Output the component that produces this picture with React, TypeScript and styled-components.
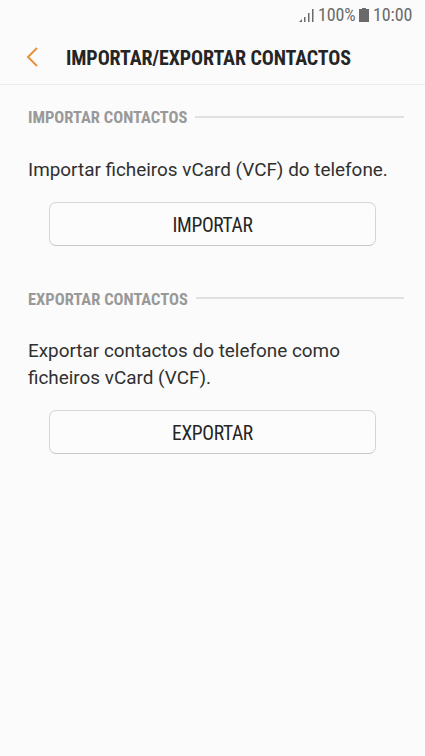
import React from "react";
import styled, { createGlobalStyle } from "styled-components";

const GlobalStyle = createGlobalStyle`
  * { box-sizing: border-box; }
  body { margin: 0; background: #fbfbfb; }
`;

const Screen = styled.main`
  width: 425px;
  height: 756px;
  background: #fbfbfb;
  color: #303030;
  font-family: Roboto, sans-serif;
  overflow: hidden;
`;

const StatusBar = styled.div`
  display: flex;
  justify-content: flex-end;
  align-items: center;
  height: 30px;
  padding-right: 13px;
  color: #6a6a6a;
`;

const StatusText = styled.span<{ $width: number }>`
  width: ${(p) => p.$width}px;
  font-size: 18px;
  font-stretch: 75%;
  letter-spacing: -0.1px;
  line-height: 24px;
  white-space: nowrap;
`;

const SignalIcon = styled.svg`
  width: 15px;
  height: 14px;
  margin-right: 4px;
`;

const BatteryIcon = styled.svg`
  width: 10px;
  height: 14px;
  margin: 0 4px 0 3px;
`;

const Header = styled.header`
  display: flex;
  align-items: center;
  height: 55px;
  padding-left: 26px;
  border-bottom: 1px solid #ededed;
`;

const BackButton = styled.button`
  display: flex;
  width: 40px;
  padding: 0;
  border: 0;
  background: none;
`;

const Title = styled.h1`
  margin: 0;
  padding-top: 1px;
  color: #252525;
  font-size: 20px;
  font-weight: 700;
  font-stretch: 75%;
  letter-spacing: -0.1px;
  line-height: 24px;
  white-space: nowrap;
`;

const Section = styled.section<{ $top: number }>`
  padding: ${(p) => p.$top}px 21px 0 28px;
`;

const SectionHeading = styled.h2`
  display: flex;
  align-items: center;
  gap: 8px;
  height: 20px;
  margin: 0;
  color: #999;
  font-size: 16.5px;
  font-weight: 700;
  font-stretch: 75%;
  line-height: 20px;
  white-space: nowrap;
  &::after {
    content: "";
    flex: 1;
    height: 2px;
    background: #e0e0e0;
  }
`;

const HeadingLabel = styled.span<{ $drop: number }>`
  padding-top: ${(p) => p.$drop}px;
`;

const Description = styled.p`
  margin: 29px 0 0;
  font-size: 18.9px;
  line-height: 27px;
`;

const ActionButton = styled.button`
  display: flex;
  align-items: center;
  justify-content: center;
  width: 327px;
  height: 44px;
  margin: 19px 0 0 21px;
  padding: 3px 0 0;
  border: 1px solid #d6d6d6;
  border-bottom-color: #c8c8c8;
  border-radius: 7px;
  background: #fcfcfc;
  color: #252525;
  font-family: inherit;
  font-size: 19.5px;
  font-stretch: 75%;
  letter-spacing: -0.35px;
  line-height: 24px;
`;

export default function App() {
  return (
    <Screen>
      <GlobalStyle />
      <StatusBar>
        <SignalIcon viewBox="0 0 15 14" fill="currentColor">
          <path d="M0 14l3-3v3zM5 9h1.5v5H5zM9 5h1.5v9H9zM13 1h1.5v13H13z" />
        </SignalIcon>
        <StatusText $width={38}>100%</StatusText>
        <BatteryIcon viewBox="0 0 10 14" fill="currentColor">
          <path d="M3 0h4v1h3v13H0V1h3z" />
        </BatteryIcon>
        <StatusText $width={39}>10:00</StatusText>
      </StatusBar>
      <Header>
        <BackButton aria-label="Voltar">
          <svg width="14" height="20" viewBox="0 0 14 20" fill="none" stroke="#e8923c" strokeWidth="2">
            <path d="M11 1 2 10l9 9" />
          </svg>
        </BackButton>
        <Title>IMPORTAR/EXPORTAR CONTACTOS</Title>
      </Header>
      <Section $top={22}>
        <SectionHeading><HeadingLabel $drop={2}>IMPORTAR CONTACTOS</HeadingLabel></SectionHeading>
        <Description>Importar ficheiros vCard (VCF) do telefone.</Description>
        <ActionButton>IMPORTAR</ActionButton>
      </Section>
      <Section $top={42}>
        <SectionHeading><HeadingLabel $drop={4}>EXPORTAR CONTACTOS</HeadingLabel></SectionHeading>
        <Description>Exportar contactos do telefone como ficheiros vCard (VCF).</Description>
        <ActionButton>EXPORTAR</ActionButton>
      </Section>
    </Screen>
  );
}
